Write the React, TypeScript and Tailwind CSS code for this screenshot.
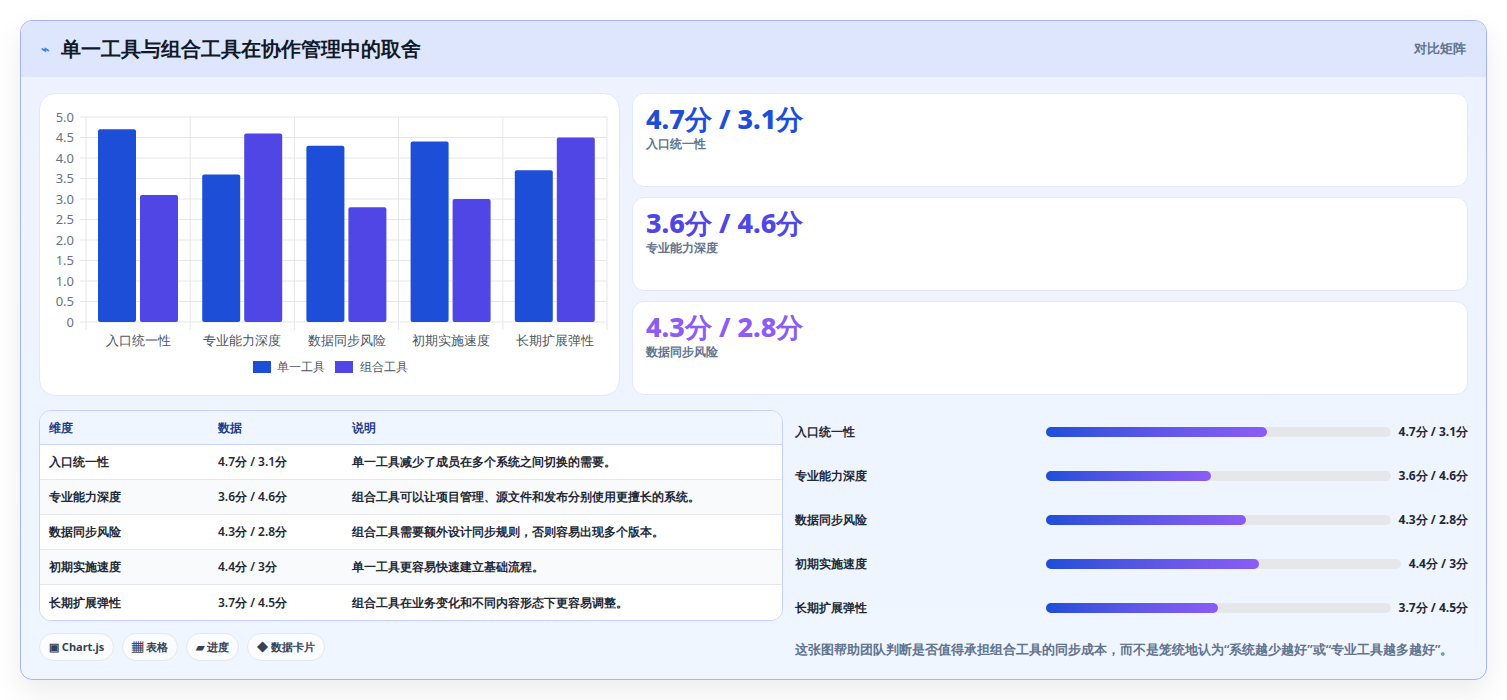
import React from "react";

const cats = ["入口统一性", "专业能力深度", "数据同步风险", "初期实施速度", "长期扩展弹性"];
const single = [4.7, 3.6, 4.3, 4.4, 3.7];
const combo = [3.1, 4.6, 2.8, 3.0, 4.5];
const notes = [
  "单一工具减少了成员在多个系统之间切换的需要。",
  "组合工具可以让项目管理、源文件和发布分别使用更擅长的系统。",
  "组合工具需要额外设计同步规则，否则容易出现多个版本。",
  "单一工具更容易快速建立基础流程。",
  "组合工具在业务变化和不同内容形态下更容易调整。",
];
const values = ["4.7分 / 3.1分", "3.6分 / 4.6分", "4.3分 / 2.8分", "4.4分 / 3分", "3.7分 / 4.5分"];
const fills = [64, 48, 58, 60, 50];

function Chart() {
  const L = 46, R = 567, T = 23, B = 228, step = (R - L) / 5;
  return (
    <svg width="581" height="303" className="block">
      {[0, 1, 2, 3, 4, 5, 6, 7, 8, 9, 10].map((k) => {
        const y = B - k * 20.5;
        return (
          <g key={k}>
            <line x1={L - 6} x2={R} y1={y} y2={y} stroke="#e5e7eb" />
            <text x={34} y={y + 4.5} textAnchor="end" fontSize="13" fill="#6b7280">{k === 0 ? "0" : (k / 2).toFixed(1)}</text>
          </g>
        );
      })}
      {[0, 1, 2, 3, 4, 5].map((i) => (
        <line key={i} x1={L + i * step} x2={L + i * step} y1={T} y2={B + 8} stroke="#e5e7eb" />
      ))}
      {cats.map((c, i) => {
        const x = L + i * step;
        return (
          <g key={c}>
            <rect x={x + 12} y={B - single[i] * 41} width={38} height={single[i] * 41} rx={2} fill="#1d4ed8" />
            <rect x={x + 54} y={B - combo[i] * 41} width={38} height={combo[i] * 41} rx={2} fill="#4f46e5" />
            <text x={x + step / 2} y={251} textAnchor="middle" fontSize="13" fill="#4b5563">{c}</text>
          </g>
        );
      })}
      <rect x={213} y={267} width={18} height={12} fill="#1d4ed8" />
      <text x={237} y={277} fontSize="12" fill="#4b5563">单一工具</text>
      <rect x={295} y={267} width={18} height={12} fill="#4f46e5" />
      <text x={320} y={277} fontSize="12" fill="#4b5563">组合工具</text>
    </svg>
  );
}

export default function App() {
  const stats = [
    { v: "4.7分 / 3.1分", l: "入口统一性", c: "text-[#1d4ed8]" },
    { v: "3.6分 / 4.6分", l: "专业能力深度", c: "text-[#4f46e5]" },
    { v: "4.3分 / 2.8分", l: "数据同步风险", c: "text-[#8b5cf6]" },
  ];
  return (
    <div className="w-[1507px] h-[700px] bg-white pt-5 pl-5 font-['Liberation_Sans','Noto_Sans_CJK_SC',sans-serif]">
      <div className="w-[1467px] h-[660px] rounded-xl border border-[#a5b4fc] bg-gradient-to-b from-[#eef2fe] to-[#eff6ff] overflow-hidden shadow-[0_12px_30px_rgba(0,0,0,0.08)]">
        <div className="h-[56px] bg-[#dde6fd] flex items-center justify-between px-5">
          <div className="flex items-center gap-3">
            <span className="text-[#3b82f6] text-sm font-bold">⌁</span>
            <h1 className="text-[20px] font-bold text-[#111827]">单一工具与组合工具在协作管理中的取舍</h1>
          </div>
          <span className="text-[13px] font-semibold text-slate-500">对比矩阵</span>
        </div>
        <div className="px-[18px] pt-4">
          <div className="flex gap-3">
            <div className="w-[581px] h-[303px] bg-white rounded-2xl border border-[#e0e7ff]">
              <Chart />
            </div>
            <div className="flex-1 flex flex-col gap-[10px]">
              {stats.map((s) => (
                <div key={s.l} className="h-[94px] bg-white rounded-xl border border-[#e0e7ff] px-[13px] pt-2">
                  <div className={`text-[27px] leading-[34px] font-extrabold ${s.c}`}>{s.v}</div>
                  <div className="text-xs font-semibold text-slate-500">{s.l}</div>
                </div>
              ))}
            </div>
          </div>
          <div className="flex gap-3 mt-[14px]">
            <div className="w-[744px]">
              <div className="rounded-xl border border-[#c7d2fe] overflow-hidden bg-white text-xs font-semibold text-[#1f2937]">
                <div className="flex h-[34px] items-center bg-[#eff6ff] text-[#1e3a8a] font-bold border-b border-[#c7d2fe]">
                  <div className="w-[178px] pl-[9px]">维度</div>
                  <div className="w-[134px]">数据</div>
                  <div>说明</div>
                </div>
                {cats.map((c, i) => (
                  <div key={c} className={`flex h-[35px] items-center ${i < 4 ? "border-b border-[#e5e7eb]" : ""} ${i % 2 ? "bg-[#f8fafc]" : "bg-white"}`}>
                    <div className="w-[178px] pl-[9px]">{c}</div>
                    <div className="w-[134px]">{values[i]}</div>
                    <div>{notes[i]}</div>
                  </div>
                ))}
              </div>
              <div className="flex gap-2 mt-3 text-[11px] font-bold text-[#374151]">
                {["▣ Chart.js", "▦ 表格", "▰ 进度", "◆ 数据卡片"].map((t) => (
                  <span key={t} className="h-[28px] px-[9px] flex items-center rounded-full bg-white/70 border border-[#e5e7eb]">{t}</span>
                ))}
              </div>
            </div>
            <div className="flex-1">
              <div className="flex flex-col">
                {cats.map((c, i) => (
                  <div key={c} className="flex items-center h-[44px] text-xs font-bold text-[#1f2937]">
                    <div className="w-[251px]">{c}</div>
                    <div className="flex-1 h-[10px] rounded-full bg-[#e5e7eb]">
                      <div className="h-full rounded-full bg-gradient-to-r from-[#1d4ed8] to-[#8b5cf6]" style={{ width: `${fills[i]}%` }} />
                    </div>
                    <div className="ml-2 whitespace-nowrap">{values[i]}</div>
                  </div>
                ))}
              </div>
              <p className="mt-[10px] text-[13px] font-semibold text-slate-500">这张图帮助团队判断是否值得承担组合工具的同步成本，而不是笼统地认为“系统越少越好”或“专业工具越多越好”。</p>
            </div>
          </div>
        </div>
      </div>
    </div>
  );
}
